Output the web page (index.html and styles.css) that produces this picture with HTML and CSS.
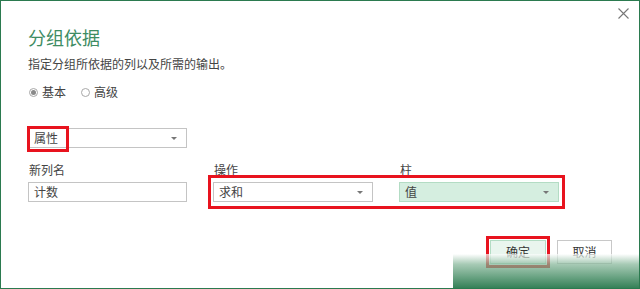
FILE: index.html
```html
<!DOCTYPE html>
<html>
<head>
<meta charset="utf-8">
<title>分组依据</title>
<link rel="stylesheet" href="styles.css">
</head>
<body>
<div class="dialog">
    <div class="topbar">
        <span class="close">
            <svg width="11" height="11" viewBox="0 0 11 11"><path d="M0.5 0.5 L10.5 10.5 M10.5 0.5 L0.5 10.5" stroke="#777" stroke-width="1.1" fill="none"/></svg>
        </span>
    </div>

    <h1 class="title">分组依据</h1>
    <p class="desc">指定分组所依据的列以及所需的输出。</p>

    <div class="radios">
        <label class="radio on"><i></i>基本</label>
        <label class="radio"><i></i>高级</label>
    </div>

    <div class="select group_by">
        <span>属性</span>
        <b class="arrow"></b>
        <em class="mark mark_small"></em>
    </div>

    <div class="fields">
        <div class="label c1">新列名</div>
        <div class="label c2">操作</div>
        <div class="label c3">柱</div>

        <div class="input c1 r2"><span>计数</span></div>
        <div class="select c2 r2"><span>求和</span><b class="arrow"></b></div>
        <div class="select green c3 r2"><span>值</span><b class="arrow"></b></div>
        <em class="mark mark_wide"></em>
    </div>

    <div class="buttons">
        <div class="btn ok">确定<em class="mark mark_btn"></em></div>
        <div class="btn">取消</div>
    </div>

    <div class="smear"></div>
</div>
</body>
</html>
```

FILE: styles.css
```css
body { margin: 0; background: #fff; }
h1, p { margin: 0; font-weight: normal; }

.dialog { width: 640px; height: 289px; box-sizing: border-box; border: 1px solid #2b7a4f; padding: 7px 10px 0 27px; position: relative; overflow: hidden; font: 12px/16px "Noto Sans CJK SC", "Noto Sans", sans-serif; color: #444; }

.topbar { display: flex; justify-content: flex-end; height: 11px; }
.close { display: block; width: 11px; height: 11px; }
.close svg { display: block; }

.title { margin-top: 6px; font-size: 18px; line-height: 24px; color: #3e8c63; }
.desc { margin-top: 7px; }

.radios { display: flex; gap: 15px; margin-top: 12px; padding-left: 1px; }
.radio { display: flex; align-items: center; gap: 4px; }
.radio i { width: 7px; height: 7px; border: 1px solid #a8a8a8; border-radius: 50%; display: flex; align-items: center; justify-content: center; }
.radio.on i:after { content: ""; width: 5px; height: 5px; border-radius: 50%; background: #8a8a8a; }

.select, .input { height: 20px; box-sizing: border-box; border: 1px solid #c4c4c4; display: flex; align-items: center; justify-content: space-between; padding: 0 9px 0 5px; position: relative; background: #fff; }
.arrow { width: 0; height: 0; border-left: 3px solid transparent; border-right: 3px solid transparent; border-top: 3px solid #777; }
.select.green { background: #d5eee0; border-color: #b3dcc4; }

.group_by { width: 159px; margin-top: 28px; }

.mark { border: 3px solid #e8131e; pointer-events: none; }
.mark_small { position: absolute; left: -2px; top: -3px; width: 36px; height: 20px; }

.fields { display: grid; grid-template-columns: 159px 160px 160px; grid-template-rows: 16px 20px; column-gap: 26px; row-gap: 4px; margin-top: 14px; }
.fields .label { padding-left: 1px; grid-row: 1; }
.fields .c1 { grid-column: 1; }
.fields .c2 { grid-column: 2; }
.fields .c3 { grid-column: 3; }
.fields .r2 { grid-row: 2; }
.mark_wide { grid-column: 2 / 4; grid-row: 2; margin: -7px -6px -7px -5px; }

.buttons { display: flex; justify-content: flex-end; gap: 11px; margin-top: 38px; padding-right: 17px; }
.btn { width: 55px; height: 24px; box-sizing: border-box; border: 1px solid #c8c8c8; display: flex; align-items: center; justify-content: center; color: #333; position: relative; background: #fff; }
.btn.ok { width: 56px; background: #e9f5ee; border-color: #b3dcc4; }
.mark_btn { position: absolute; left: -5px; top: -5px; right: -5px; bottom: -5px; }

.smear { position: absolute; left: 452px; right: 0; top: 253px; bottom: 0; background: linear-gradient(to bottom, rgba(255,255,255,0.7) 0%, rgba(130,180,150,0.7) 30%, rgba(46,125,82,0.97) 100%); }
```
